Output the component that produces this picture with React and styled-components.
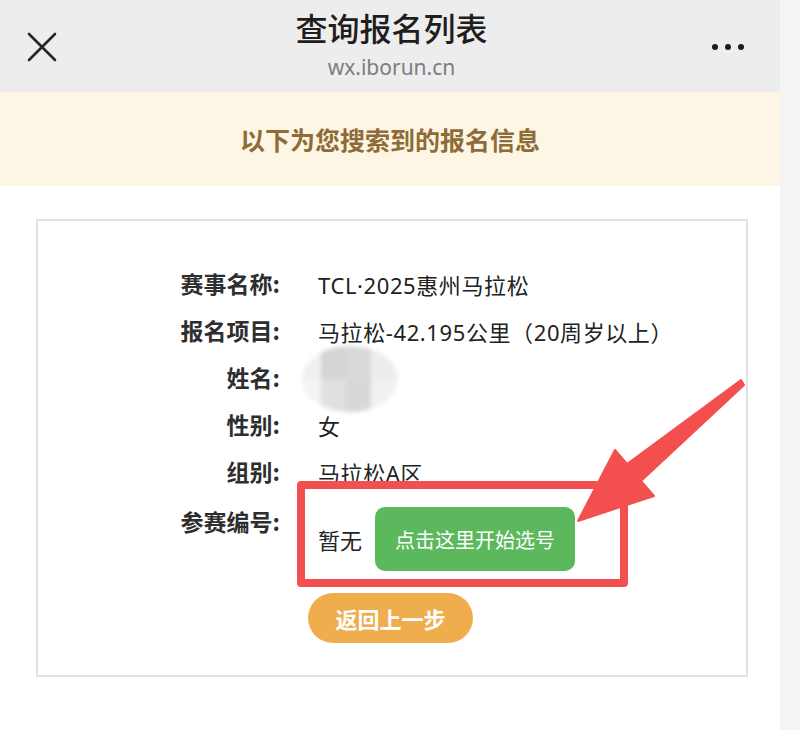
import React from "react";
import styled, { createGlobalStyle } from "styled-components";

const GlobalStyle = createGlobalStyle`
  html, body {
    margin: 0;
    padding: 0;
    background: #ffffff;
  }
  body {
    font-family: "Noto Sans CJK SC", "Noto Sans", sans-serif;
    color: #222;
  }
`;

const rows = [
  { label: "赛事名称:", value: "TCL·2025惠州马拉松" },
  { label: "报名项目:", value: "马拉松-42.195公里（20周岁以上）" },
  { label: "姓名:", value: null },
  { label: "性别:", value: "女" },
  { label: "组别:", value: "马拉松A区" },
];

const App = () => {
  return (
    <Page>
      <GlobalStyle />
      <Main>
        <Header>
          <CloseBtn>
            <svg width="30" height="30" viewBox="0 0 30 30">
              <path
                d="M2 2 L28 28 M28 2 L2 28"
                stroke="#262626"
                strokeWidth="2.6"
                strokeLinecap="round"
              />
            </svg>
          </CloseBtn>
          <TitleBox>
            <Title>查询报名列表</Title>
            <Domain>wx.iborun.cn</Domain>
          </TitleBox>
          <MoreBtn>
            <Dot />
            <Dot />
            <Dot />
          </MoreBtn>
        </Header>

        <Notice>以下为您搜索到的报名信息</Notice>

        <Card>
          <InfoGrid>
            {rows.map((row) => (
              <React.Fragment key={row.label}>
                <Label>{row.label}</Label>
                {row.value ? (
                  <Value>{row.value}</Value>
                ) : (
                  <Value>
                    <Mosaic />
                  </Value>
                )}
              </React.Fragment>
            ))}
            <Label $last>参赛编号:</Label>
            <NumberCell>
              <HighlightBox />
              <span>暂无</span>
              <PickButton>点击这里开始选号</PickButton>
            </NumberCell>
            <span />
            <BackCell>
              <BackButton>返回上一步</BackButton>
            </BackCell>
          </InfoGrid>
        </Card>
      </Main>
      <SideStrip />

      <ArrowLayer width="800" height="730" viewBox="0 0 800 730">
        <polygon
          points="578,521 615,450 627,464 741,380 744,385 641,481 654,496"
          fill="#f44f4f"
          stroke="#f44f4f"
          strokeWidth="2"
          strokeLinejoin="round"
        />
      </ArrowLayer>
    </Page>
  );
};

export default App;

const Page = styled.div`
  position: relative;
  display: flex;
  width: 800px;
  height: 730px;
  overflow: hidden;
`;

const Main = styled.div`
  width: 780px;
  display: flex;
  flex-direction: column;
`;

const SideStrip = styled.div`
  width: 20px;
  background: #f4f4f4;
`;

const Header = styled.div`
  height: 92px;
  background: #ededed;
  display: flex;
  align-items: center;
  justify-content: space-between;
  padding: 0 36px 0 27px;
  box-sizing: border-box;
`;

const CloseBtn = styled.div`
  width: 30px;
  height: 30px;
  margin-top: 2px;
`;

const TitleBox = styled.div`
  display: flex;
  flex-direction: column;
  align-items: center;
  margin-left: 14px;
`;

const Title = styled.div`
  font-size: 32px;
  font-weight: 500;
  line-height: 40px;
  color: #1e1e1e;
  margin-top: -4px;
`;

const Domain = styled.div`
  font-family: "Noto Sans", "Open Sans", sans-serif;
  font-size: 21px;
  line-height: 28px;
  color: #7d7d7d;
  margin-top: 6px;
`;

const MoreBtn = styled.div`
  display: flex;
  gap: 7px;
  margin-top: 2px;
`;

const Dot = styled.span`
  width: 6px;
  height: 6px;
  border-radius: 50%;
  background: #1a1a1a;
`;

const Notice = styled.div`
  height: 94px;
  background: #fdf6e4;
  display: flex;
  align-items: center;
  justify-content: center;
  font-size: 25px;
  font-weight: 700;
  color: #8e6b37;
`;

const Card = styled.div`
  margin: 33px 0 0 36px;
  width: 712px;
  height: 458px;
  box-sizing: border-box;
  border: 2px solid #e2e2e2;
  padding-top: 39px;
`;

const InfoGrid = styled.div`
  display: grid;
  grid-template-columns: 242px auto;
  column-gap: 38px;
  align-items: start;
`;

const Label = styled.div`
  text-align: right;
  font-size: 23px;
  font-weight: 700;
  color: #2e2e2e;
  line-height: ${(p) => (p.$last ? "26px" : "47px")};
  margin-top: ${(p) => (p.$last ? "13px" : "0")};
`;

const Value = styled.div`
  height: 47px;
  display: flex;
  align-items: center;
  font-family: "Noto Sans", "Noto Sans CJK SC", sans-serif;
  font-size: 22px;
  letter-spacing: 0.6px;
  color: #222;
`;

const Mosaic = styled.span`
  width: 96px;
  height: 66px;
  margin: -8px 0 -10px -16px;
  border-radius: 50%;
  background:
    linear-gradient(90deg, #f0f0f0 0 20%, #d4d4d4 20% 46%, #d9d9d9 46% 72%, #ededed 72%) top / 100% 50% no-repeat,
    linear-gradient(90deg, #f3f3f3 0 20%, #e0e0e0 20% 46%, #d8d8d8 46% 72%, #f1f1f1 72%) bottom / 100% 50% no-repeat;
  filter: blur(2px);
`;

const NumberCell = styled.div`
  position: relative;
  display: flex;
  align-items: center;
  gap: 13px;
  margin-top: 12px;
  height: 64px;
  font-size: 22px;
  color: #222;
`;

const HighlightBox = styled.div`
  position: absolute;
  left: -21px;
  top: -26px;
  width: 331px;
  height: 106px;
  box-sizing: border-box;
  border: 8px solid #f44f4f;
  border-radius: 4px;
  pointer-events: none;
`;

const PickButton = styled.div`
  width: 200px;
  height: 64px;
  border-radius: 10px;
  background: #5cb85c;
  color: #ffffff;
  font-size: 20px;
  display: flex;
  align-items: center;
  justify-content: center;
`;

const BackCell = styled.div`
  margin-top: 22px;
  margin-left: -10px;
`;

const BackButton = styled.div`
  width: 165px;
  height: 50px;
  border-radius: 25px;
  background: #f0ad4e;
  color: #ffffff;
  font-size: 22px;
  font-weight: 700;
  display: flex;
  align-items: center;
  justify-content: center;
`;

const ArrowLayer = styled.svg`
  position: absolute;
  left: 0;
  top: 0;
  pointer-events: none;
`;
